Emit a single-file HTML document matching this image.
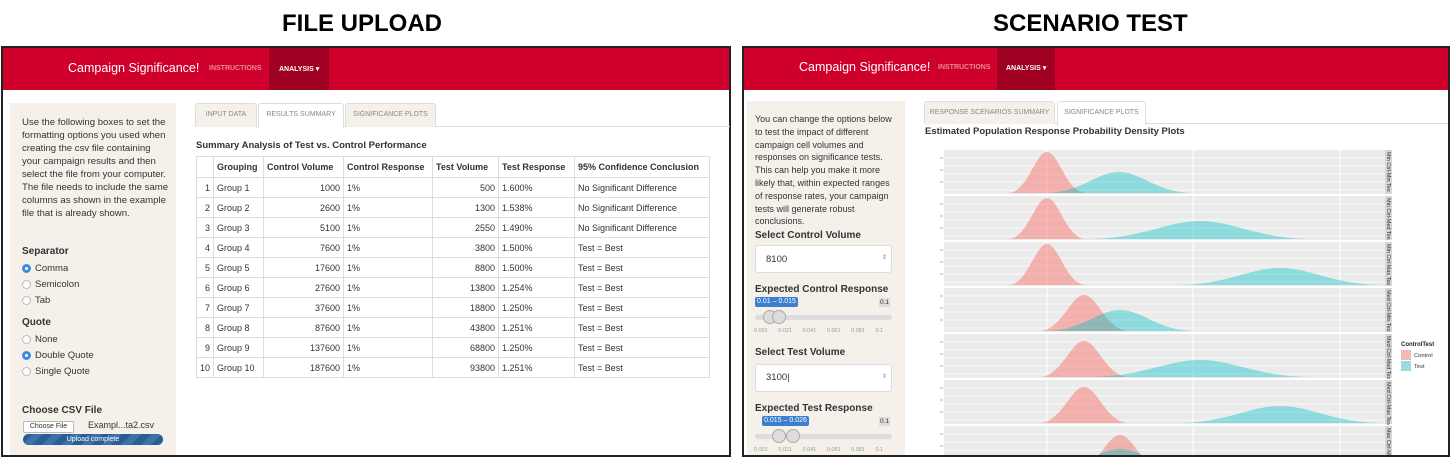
<!DOCTYPE html>
<html><head><meta charset="utf-8"><style>
*{margin:0;padding:0;box-sizing:border-box}
body{width:1451px;height:457px;background:#fff;position:relative;overflow:hidden;font-family:"Liberation Sans",sans-serif;color:#333}
.a{position:absolute;white-space:nowrap}
.h{font-weight:bold;font-size:24px;color:#000}
.frame{position:absolute;border:2px solid #222}
.nav{position:absolute;background:#d0002c;height:42px}
.brand{color:#fff;font-size:12.5px}
.ni{font-size:7px;color:#e88a98;font-weight:bold}
.act{position:absolute;background:#a00022;height:42px}
.side{position:absolute;background:#f5f1ea}
.st{font-size:9.6px;line-height:13px;color:#333}
.lb{font-weight:bold;font-size:10px;color:#333}
.rd{font-size:9.5px}
.rc{position:absolute;width:9px;height:9px;border-radius:50%;border:1px solid #bbb;background:#fff}
.rc.on{border:3px solid #3b8ddf}
.tab{position:absolute;border:1px solid #ddd;border-bottom:none;font-size:7px;color:#888;text-align:center;background:#f5f1ea;border-radius:3px 3px 0 0}
.tab.on{background:#fff}
table{border-collapse:collapse;font-size:9px;position:absolute}
td,th{border:1px solid #ddd;padding:0 3px;height:20px}
th{font-weight:bold;text-align:left;height:21px}
td.r{text-align:right}
</style></head><body>
<div class="a h" style="left:282px;top:10px">FILE UPLOAD</div>
<div class="a h" style="left:993px;top:10px">SCENARIO TEST</div>

<!-- LEFT -->
<div class="frame" style="left:1px;top:46px;width:730px;height:411px"></div>
<div class="nav" style="left:3px;top:48px;width:726px"></div>
<div class="act" style="left:269px;top:48px;width:60px"></div>
<div class="a brand" style="left:68px;top:61px">Campaign Significance!</div>
<div class="a ni" style="left:209px;top:65px">INSTRUCTIONS</div>
<div class="a ni" style="left:279px;top:65px;color:#fff">ANALYSIS ▾</div>
<div class="side" style="left:10px;top:103px;width:166px;height:352px"></div>
<div class="a st" style="left:22px;top:116px">Use the following boxes to set the<br>formatting options you used when<br>creating the csv file containing<br>your campaign results and then<br>select the file from your computer.<br>The file needs to include the same<br>columns as shown in the example<br>file that is already shown.</div>
<div class="a lb" style="left:22px;top:246px">Separator</div>
<div class="rc on" style="left:22px;top:264px"></div><div class="a rd" style="left:35px;top:263px">Comma</div>
<div class="rc" style="left:22px;top:280px"></div><div class="a rd" style="left:35px;top:279px">Semicolon</div>
<div class="rc" style="left:22px;top:296px"></div><div class="a rd" style="left:35px;top:295px">Tab</div>
<div class="a lb" style="left:22px;top:317px">Quote</div>
<div class="rc" style="left:22px;top:335px"></div><div class="a rd" style="left:35px;top:334px">None</div>
<div class="rc on" style="left:22px;top:351px"></div><div class="a rd" style="left:35px;top:350px">Double Quote</div>
<div class="rc" style="left:22px;top:367px"></div><div class="a rd" style="left:35px;top:366px">Single Quote</div>
<div class="a lb" style="left:22px;top:405px">Choose CSV File</div>
<div class="a" style="left:23px;top:421px;width:51px;height:12px;border:1px solid #bbb;background:#fff;font-size:7px;text-align:center;line-height:10px;border-radius:2px">Choose File</div>
<div class="a" style="left:88px;top:420px;font-size:9px">Exampl...ta2.csv</div>
<div class="a" style="left:23px;top:434px;width:140px;height:11px;border-radius:6px;background:repeating-linear-gradient(135deg,#2a5d94 0 7px,#3e71a8 7px 14px);color:#fff;font-size:7px;text-align:center;line-height:11px">Upload complete</div>

<div class="a" style="left:195px;top:126px;width:535px;height:1px;background:#ddd"></div>
<div class="tab" style="left:195px;top:103px;width:62px;height:24px;line-height:22px">INPUT DATA</div>
<div class="tab on" style="left:258px;top:103px;width:86px;height:25px;line-height:22px">RESULTS SUMMARY</div>
<div class="tab" style="left:345px;top:103px;width:91px;height:24px;line-height:22px">SIGNIFICANCE PLOTS</div>
<div class="a lb" style="left:196px;top:140px;font-size:9.5px">Summary Analysis of Test vs. Control Performance</div>
<table style="left:196px;top:156px;width:514px">
<tr><th style="width:17px"></th><th style="width:50px">Grouping</th><th style="width:80px">Control Volume</th><th style="width:89px">Control Response</th><th style="width:66px">Test Volume</th><th style="width:76px">Test Response</th><th>95% Confidence Conclusion</th></tr>
<tr><td class="r">1</td><td>Group 1</td><td class="r">1000</td><td>1%</td><td class="r">500</td><td>1.600%</td><td>No Significant Difference</td></tr>
<tr><td class="r">2</td><td>Group 2</td><td class="r">2600</td><td>1%</td><td class="r">1300</td><td>1.538%</td><td>No Significant Difference</td></tr>
<tr><td class="r">3</td><td>Group 3</td><td class="r">5100</td><td>1%</td><td class="r">2550</td><td>1.490%</td><td>No Significant Difference</td></tr>
<tr><td class="r">4</td><td>Group 4</td><td class="r">7600</td><td>1%</td><td class="r">3800</td><td>1.500%</td><td>Test = Best</td></tr>
<tr><td class="r">5</td><td>Group 5</td><td class="r">17600</td><td>1%</td><td class="r">8800</td><td>1.500%</td><td>Test = Best</td></tr>
<tr><td class="r">6</td><td>Group 6</td><td class="r">27600</td><td>1%</td><td class="r">13800</td><td>1.254%</td><td>Test = Best</td></tr>
<tr><td class="r">7</td><td>Group 7</td><td class="r">37600</td><td>1%</td><td class="r">18800</td><td>1.250%</td><td>Test = Best</td></tr>
<tr><td class="r">8</td><td>Group 8</td><td class="r">87600</td><td>1%</td><td class="r">43800</td><td>1.251%</td><td>Test = Best</td></tr>
<tr><td class="r">9</td><td>Group 9</td><td class="r">137600</td><td>1%</td><td class="r">68800</td><td>1.250%</td><td>Test = Best</td></tr>
<tr><td class="r">10</td><td>Group 10</td><td class="r">187600</td><td>1%</td><td class="r">93800</td><td>1.251%</td><td>Test = Best</td></tr>
</table>

<!-- RIGHT -->
<div class="frame" style="left:742px;top:46px;width:708px;height:411px"></div>
<div class="nav" style="left:744px;top:48px;width:704px"></div>
<div class="act" style="left:997px;top:48px;width:58px"></div>
<div class="a brand" style="left:799px;top:60px">Campaign Significance!</div>
<div class="a ni" style="left:938px;top:64px">INSTRUCTIONS</div>
<div class="a ni" style="left:1006px;top:64px;color:#fff">ANALYSIS ▾</div>
<div class="side" style="left:747px;top:101px;width:158px;height:354px"></div>
<div class="a st" style="left:755px;top:113px;font-size:9px;line-height:12.8px">You can change the options below<br>to test the impact of different<br>campaign cell volumes and<br>responses on significance tests.<br>This can help you make it more<br>likely that, within expected ranges<br>of response rates, your campaign<br>tests will generate robust<br>conclusions.</div>
<div class="a lb" style="left:755px;top:230px">Select Control Volume</div>
<div class="a" style="left:755px;top:245px;width:137px;height:28px;background:#fff;border:1px solid #ddd;border-radius:3px;font-size:9.5px;padding:8px 10px">8100<span style="position:absolute;right:4px;top:8px;font-size:6px;color:#888">⇕</span></div>
<div class="a lb" style="left:755px;top:284px">Expected Control Response</div>
<div class="a" style="left:755px;top:297px;width:43px;height:10px;background:#3b7fd0;color:#fff;font-size:7px;line-height:10px;text-align:center;border-radius:2px">0.01 – 0.015</div>
<div class="a" style="left:879px;top:298px;width:11px;height:9px;background:#ddd;font-size:6.5px;line-height:9px;text-align:center">0.1</div>
<div class="a" style="left:755px;top:315px;width:137px;height:5px;background:#ddd;border-radius:3px"></div>
<div class="a" style="left:763px;top:310px;width:14px;height:14px;border-radius:50%;background:#ddd;border:1px solid #aaa"></div>
<div class="a" style="left:772px;top:310px;width:14px;height:14px;border-radius:50%;background:#ddd;border:1px solid #aaa"></div>
<div class="a" style="left:754px;top:328px;font-size:5.5px;color:#999;word-spacing:9px">0.001 0.021 0.041 0.061 0.081 0.1</div>
<div class="a lb" style="left:755px;top:347px">Select Test Volume</div>
<div class="a" style="left:755px;top:364px;width:137px;height:28px;background:#fff;border:1px solid #ddd;border-radius:3px;font-size:9.5px;padding:7px 10px">3100|<span style="position:absolute;right:4px;top:8px;font-size:6px;color:#888">⇕</span></div>
<div class="a lb" style="left:755px;top:403px">Expected Test Response</div>
<div class="a" style="left:762px;top:416px;width:47px;height:10px;background:#3b7fd0;color:#fff;font-size:7px;line-height:10px;text-align:center;border-radius:2px">0.015 – 0.026</div>
<div class="a" style="left:879px;top:417px;width:11px;height:9px;background:#ddd;font-size:6.5px;line-height:9px;text-align:center">0.1</div>
<div class="a" style="left:755px;top:434px;width:137px;height:5px;background:#ddd;border-radius:3px"></div>
<div class="a" style="left:772px;top:429px;width:14px;height:14px;border-radius:50%;background:#ddd;border:1px solid #aaa"></div>
<div class="a" style="left:786px;top:429px;width:14px;height:14px;border-radius:50%;background:#ddd;border:1px solid #aaa"></div>
<div class="a" style="left:754px;top:447px;font-size:5.5px;color:#999;word-spacing:9px">0.001 0.021 0.041 0.061 0.081 0.1</div>

<div class="a" style="left:924px;top:123px;width:524px;height:1px;background:#ddd"></div>
<div class="tab" style="left:924px;top:101px;width:131px;height:23px;line-height:22px">RESPONSE SCENARIOS SUMMARY</div>
<div class="tab on" style="left:1057px;top:101px;width:89px;height:24px;line-height:22px">SIGNIFICANCE PLOTS</div>
<div class="a lb" style="left:925px;top:126px;font-size:9.5px">Estimated Population Response Probability Density Plots</div>

<svg class="a" style="left:0;top:0" width="1451" height="455" viewBox="0 0 1451 455">
<g fill="#ebebeb">
<rect x="944" y="150" width="441" height="44"/><rect x="944" y="196" width="441" height="44"/><rect x="944" y="242" width="441" height="44"/><rect x="944" y="288" width="441" height="44"/><rect x="944" y="334" width="441" height="44"/><rect x="944" y="380" width="441" height="44"/><rect x="944" y="426" width="441" height="29"/>
</g>
<g fill="#d6d6d6">
<rect x="1385" y="150" width="7" height="44"/><rect x="1385" y="196" width="7" height="44"/><rect x="1385" y="242" width="7" height="44"/><rect x="1385" y="288" width="7" height="44"/><rect x="1385" y="334" width="7" height="44"/><rect x="1385" y="380" width="7" height="44"/><rect x="1385" y="426" width="7" height="29"/>
</g>
<g stroke="#fff" stroke-width="0.8">
<path d="M944 158H1385M944 166H1385M944 174H1385M944 182H1385M944 190H1385M944 204H1385M944 212H1385M944 220H1385M944 228H1385M944 236H1385M944 250H1385M944 258H1385M944 266H1385M944 274H1385M944 282H1385M944 296H1385M944 304H1385M944 312H1385M944 320H1385M944 328H1385M944 342H1385M944 350H1385M944 358H1385M944 366H1385M944 374H1385M944 388H1385M944 396H1385M944 404H1385M944 412H1385M944 420H1385M944 434H1385M944 442H1385M944 450H1385"/>
<path d="M1047 150V455M1193 150V455M1340 150V455" stroke-width="1"/>
</g>
<g fill="rgb(248,118,109)" fill-opacity="0.5">
<path d="M1008,193 C1027.5,193 1035.3,152 1047,152 C1058.7,152 1066.5,193 1086,193Z"/>
<path d="M1008,239 C1027.5,239 1035.3,198 1047,198 C1058.7,198 1066.5,239 1086,239Z"/>
<path d="M1008,285 C1027.5,285 1035.3,244 1047,244 C1058.7,244 1066.5,285 1086,285Z"/>
<path d="M1039,331 C1061.5,331 1070.5,295 1084,295 C1097.5,295 1106.5,331 1129,331Z"/>
<path d="M1039,377 C1061.5,377 1070.5,341 1084,341 C1097.5,341 1106.5,377 1129,377Z"/>
<path d="M1039,423 C1061.5,423 1070.5,387 1084,387 C1097.5,387 1106.5,423 1129,423Z"/>
<path d="M1075,470 C1097.5,470 1106.5,435 1120,435 C1133.5,435 1142.5,470 1165,470Z"/>
</g>
<g fill="rgb(0,191,196)" fill-opacity="0.4">
<path d="M1044,193 C1081.5,193 1096.5,172 1119,172 C1141.5,172 1156.5,193 1194,193Z"/>
<path d="M1086,239 C1143,239 1165.8,221 1200,221 C1234.2,221 1257,239 1314,239Z"/>
<path d="M1175,285 C1227.5,285 1248.5,268 1280,268 C1311.5,268 1332.5,285 1385,285Z"/>
<path d="M1045,331 C1082.5,331 1097.5,310 1120,310 C1142.5,310 1157.5,331 1195,331Z"/>
<path d="M1086,377 C1143,377 1165.8,360 1200,360 C1234.2,360 1257,377 1314,377Z"/>
<path d="M1175,423 C1227.5,423 1248.5,406 1280,406 C1311.5,406 1332.5,423 1385,423Z"/>
<path d="M1045,470 C1082.5,470 1097.5,449 1120,449 C1142.5,449 1157.5,470 1195,470Z"/>
</g>
<g stroke="#666" stroke-width="0.6"><path d="M940 158h3M940 170h3M940 182h3M940 204h3M940 216h3M940 228h3M940 250h3M940 262h3M940 274h3M940 296h3M940 308h3M940 320h3M940 342h3M940 354h3M940 366h3M940 388h3M940 400h3M940 412h3M940 434h3M940 446h3"/></g>
<g font-size="5.5" fill="#333" font-family="Liberation Sans">
<text transform="translate(1387,152) rotate(90)">Min Ctrl-Min Tes</text>
<text transform="translate(1387,198) rotate(90)">Min Ctrl-Med Tes</text>
<text transform="translate(1387,244) rotate(90)">Min Ctrl-Max Tes</text>
<text transform="translate(1387,290) rotate(90)">Med Ctrl-Min Tes</text>
<text transform="translate(1387,336) rotate(90)">Med Ctrl-Med Tes</text>
<text transform="translate(1387,382) rotate(90)">Med Ctrl-Max Tes</text>
<text transform="translate(1387,428) rotate(90)">Max Ctrl-Min</text>
</g>
<text x="1401" y="346" font-size="6" font-weight="bold" font-family="Liberation Sans" fill="#222">ControlTest</text>
<rect x="1401" y="350" width="10" height="10" fill="#f4b9b4"/>
<rect x="1401" y="361" width="10" height="10" fill="#99dcdd"/>
<text x="1414" y="357" font-size="5.8" font-family="Liberation Sans" fill="#333">Control</text>
<text x="1414" y="368" font-size="5.8" font-family="Liberation Sans" fill="#333">Test</text>
</svg>
</body></html>
